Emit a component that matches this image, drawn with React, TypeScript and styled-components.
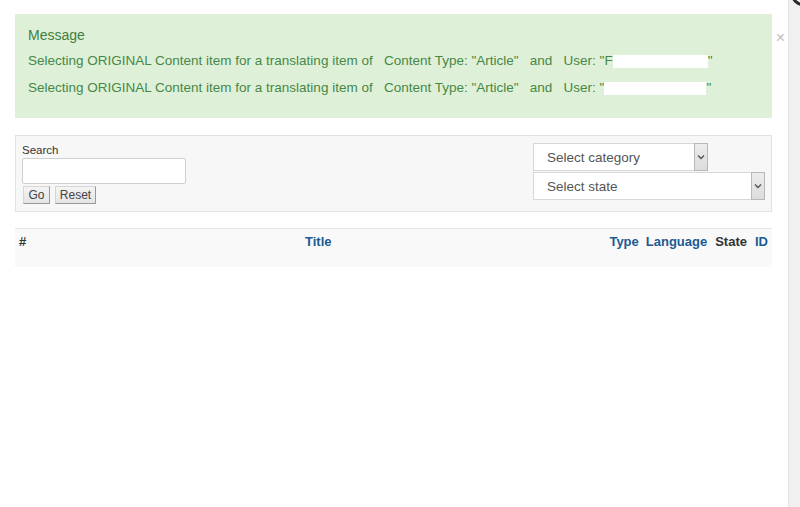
import React from "react";
import styled, { createGlobalStyle } from "styled-components";

const Global = createGlobalStyle`
  html, body { margin: 0; padding: 0; background: #fff; }
  body { font-family: Arial, "Liberation Sans", Helvetica, sans-serif; color: #333; }
  * { box-sizing: border-box; }
`;

const Frame = styled.div`
  position: relative;
  display: flex;
  width: 800px;
  height: 507px;
  overflow: hidden;
  background: #fff;
`;

const Main = styled.div`
  width: 788px;
  flex-shrink: 0;
  padding: 14px 16px 0 15px;
  display: flex;
  flex-direction: column;
`;

const Track = styled.div`
  width: 12px;
  flex-shrink: 0;
  background: #f0f0f0;
  border-left: 1px solid #e4e4e4;
`;

const ModalClose = styled.div`
  position: absolute;
  top: -18px;
  right: -15px;
  width: 24px;
  height: 24px;
  border-radius: 50%;
  background: #fff;
  border: 3px solid #2a2a2a;
`;

const AlertRow = styled.div`
  position: relative;
`;

const Alert = styled.div`
  height: 104px;
  background: #dff0d8;
  color: #468847;
  padding: 12px 13px 0 13px;
  font-size: 13.5px;
`;

const AlertTitle = styled.div`
  font-size: 14px;
  line-height: 18px;
  color: #3f7f40;
`;

const AlertLines = styled.div`
  margin-top: 3px;
`;

const AlertLine = styled.div`
  line-height: 27px;
  white-space: pre;
  display: flex;
  align-items: center;
`;

const Redact = styled.span<{ $w: number }>`
  display: inline-block;
  width: ${(p) => p.$w}px;
  height: 13px;
  background: #fff;
  margin-top: 2px;
`;

const CloseX = styled.span`
  position: absolute;
  top: 16px;
  right: -13px;
  font-size: 16px;
  line-height: 16px;
  color: #c0c0c0;
`;

const FilterBox = styled.div`
  margin-top: 17px;
  height: 77px;
  border: 1px solid #e2e2e2;
  background: #f7f7f7;
  padding: 7px 6px 0 6px;
  display: flex;
  justify-content: space-between;
`;

const SearchCol = styled.div`
  display: flex;
  flex-direction: column;
  align-items: flex-start;
`;

const Label = styled.label`
  font-size: 11.5px;
  line-height: 14px;
  color: #333;
`;

const Input = styled.div`
  margin-top: 1px;
  width: 164px;
  height: 26px;
  background: #fff;
  border: 1px solid #cfcfcf;
  border-radius: 2px;
`;

const Buttons = styled.div`
  display: flex;
  gap: 5px;
  margin-top: 2px;
  margin-left: 1px;
`;

const Btn = styled.button<{ $w: number }>`
  height: 18px;
  width: ${(p) => p.$w}px;
  padding: 0;
  font-family: Arial, "Liberation Sans", sans-serif;
  font-size: 12px;
  color: #444;
  background: linear-gradient(#f4f4f4, #e4e4e4);
  border: 1px solid #d6d6d6;
  border-right-color: #9a9a9a;
  border-bottom-color: #9a9a9a;
`;

const SelectCol = styled.div`
  display: flex;
  flex-direction: column;
  gap: 1px;
`;

const Select = styled.div<{ $w: number }>`
  width: ${(p) => p.$w}px;
  height: 28px;
  background: #fff;
  border: 1px solid #d8d8d8;
  display: flex;
  align-items: center;
  justify-content: space-between;
  padding-left: 13px;
  font-size: 13.5px;
  color: #555;
`;

const Arrow = styled.span`
  width: 14px;
  height: 28px;
  margin-right: -1px;
  background: linear-gradient(#ececec, #dcdcdc);
  border: 1px solid #b8b8b8;
  display: flex;
  align-items: center;
  justify-content: center;
`;

const TableHead = styled.div`
  margin-top: 16px;
  height: 39px;
  border-top: 1px solid #e6e6e6;
  background: #f9f9f9;
  display: flex;
  align-items: flex-start;
  padding: 5px 4px 0 4px;
  font-size: 13px;
  font-weight: bold;
  line-height: 15px;
`;

const HeadCell = styled.span<{ $link?: boolean; $w?: number; $grow?: boolean; $gap?: number }>`
  color: ${(p) => (p.$link ? "#1c5a92" : "#333")};
  ${(p) => (p.$w ? `width: ${p.$w}px;` : "")}
  ${(p) => (p.$grow ? "flex: 1;" : "")}
  ${(p) => (p.$gap ? `margin-left: ${p.$gap}px;` : "")}
`;

const Chevron = () => (
  <svg width="8" height="6" viewBox="0 0 8 6">
    <path d="M1 1.5 L4 4.5 L7 1.5" fill="none" stroke="#555" strokeWidth="1.4" />
  </svg>
);

const line = (first: boolean) => (
  <AlertLine>
    {'Selecting ORIGINAL Content item for a translating item of   Content Type: "Article"   and   User: "'}
    {first ? "F" : ""}
    <Redact $w={first ? 95 : 102} />
    {'"'}
  </AlertLine>
);

export default function App() {
  return (
    <>
      <Global />
      <Frame>
        <Main>
          <AlertRow>
            <Alert>
              <AlertTitle>Message</AlertTitle>
              <AlertLines>
                {line(true)}
                {line(false)}
              </AlertLines>
            </Alert>
            <CloseX>×</CloseX>
          </AlertRow>
          <FilterBox>
            <SearchCol>
              <Label>Search</Label>
              <Input />
              <Buttons>
                <Btn $w={27}>Go</Btn>
                <Btn $w={41}>Reset</Btn>
              </Buttons>
            </SearchCol>
            <SelectCol>
              <Select $w={175}>
                Select category
                <Arrow>
                  <Chevron />
                </Arrow>
              </Select>
              <Select $w={232}>
                Select state
                <Arrow>
                  <Chevron />
                </Arrow>
              </Select>
            </SelectCol>
          </FilterBox>
          <TableHead>
            <HeadCell $w={286}>#</HeadCell>
            <HeadCell $link $grow>Title</HeadCell>
            <HeadCell $link>Type</HeadCell>
            <HeadCell $link $gap={7}>Language</HeadCell>
            <HeadCell $gap={8}>State</HeadCell>
            <HeadCell $link $gap={8}>ID</HeadCell>
          </TableHead>
        </Main>
        <Track />
        <ModalClose />
      </Frame>
    </>
  );
}
